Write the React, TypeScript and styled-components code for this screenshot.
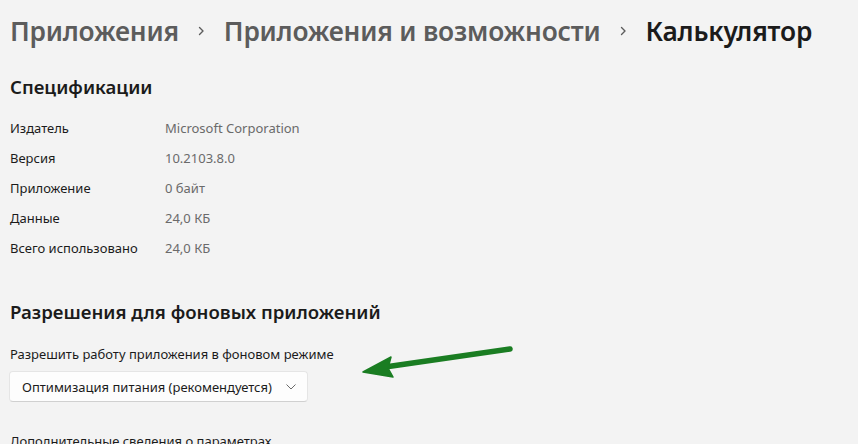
import React from 'react';
import styled, { createGlobalStyle } from 'styled-components';

const GlobalStyle = createGlobalStyle`
  html, body {
    margin: 0;
    padding: 0;
    background: #f3f3f3;
  }
  body {
    font-family: "Noto Sans", "Open Sans", sans-serif;
    color: #1a1a1a;
    overflow: hidden;
  }
`;

const Root = styled.div`
  position: relative;
  width: 858px;
  height: 444px;
  overflow: hidden;
  padding: 0 0 0 10px;
  box-sizing: border-box;
`;

const Breadcrumbs = styled.div`
  display: flex;
  align-items: center;
  height: 62px;
  font-size: 26.3px;
  font-weight: 600;
  letter-spacing: -0.2px;
`;

const Crumb = styled.span<{ $current?: boolean }>`
  color: ${(p) => (p.$current ? '#1b1b1b' : '#5c5c5c')};
`;

const Separator = styled.span`
  display: flex;
  align-items: center;
  justify-content: center;
  width: 45px;
  color: #5c5c5c;
`;

const SectionTitle = styled.h2`
  margin: 0;
  font-size: 18.6px;
  font-weight: 600;
  line-height: 26px;
  color: #1b1b1b;
`;

const SpecList = styled.div`
  display: flex;
  flex-direction: column;
  margin-top: 13px;
`;

const SpecRow = styled.div`
  display: grid;
  grid-template-columns: 155px 1fr;
  height: 30px;
  align-items: center;
  font-size: 13px;
`;

const SpecLabel = styled.span`
  color: #1b1b1b;
`;

const SpecValue = styled.span`
  color: #6a6a6a;
`;

const Section = styled.section<{ $top: number }>`
  margin-top: ${(p) => p.$top}px;
`;

const FieldLabel = styled.div`
  margin-top: 20px;
  font-size: 13px;
  color: #1b1b1b;
  line-height: 18px;
`;

const Select = styled.div`
  display: inline-flex;
  align-items: center;
  gap: 14px;
  margin-top: 8px;
  margin-left: -1px;
  height: 31px;
  padding: 0 11px 0 12px;
  box-sizing: border-box;
  background: #fdfdfd;
  border: 1px solid #e5e5e5;
  border-bottom-color: #d0d0d0;
  border-radius: 4px;
  font-size: 13px;
  color: #1b1b1b;
`;

const MoreLink = styled.div`
  margin-top: 30px;
  font-size: 13px;
  color: #1b1b1b;
`;

const Arrow = styled.svg`
  position: absolute;
  left: 355px;
  top: 340px;
`;

const specs = [
  ['Издатель', 'Microsoft Corporation'],
  ['Версия', '10.2103.8.0'],
  ['Приложение', '0 байт'],
  ['Данные', '24,0 КБ'],
  ['Всего использовано', '24,0 КБ'],
];

const Chevron = ({ size = 12 }: { size?: number }) => (
  <svg width={size} height={size} viewBox="0 0 12 12">
    <path d="M4.5 2.5 L8 6 L4.5 9.5" fill="none" stroke="#5c5c5c" strokeWidth="1.4" strokeLinecap="round" strokeLinejoin="round" />
  </svg>
);

export default function App() {
  return (
    <Root>
      <GlobalStyle />
      <Breadcrumbs>
        <Crumb>Приложения</Crumb>
        <Separator>
          <Chevron />
        </Separator>
        <Crumb>Приложения и возможности</Crumb>
        <Separator>
          <Chevron />
        </Separator>
        <Crumb $current>Калькулятор</Crumb>
      </Breadcrumbs>

      <Section $top={12}>
        <SectionTitle>Спецификации</SectionTitle>
        <SpecList>
          {specs.map(([label, value]) => (
            <SpecRow key={label}>
              <SpecLabel>{label}</SpecLabel>
              <SpecValue>{value}</SpecValue>
            </SpecRow>
          ))}
        </SpecList>
      </Section>

      <Section $top={36}>
        <SectionTitle>Разрешения для фоновых приложений</SectionTitle>
        <FieldLabel>Разрешить работу приложения в фоновом режиме</FieldLabel>
        <Select>
          <span>Оптимизация питания (рекомендуется)</span>
          <svg width="10" height="6" viewBox="0 0 10 6">
            <path d="M0.5 0.5 L5 5 L9.5 0.5" fill="none" stroke="#6a6a6a" strokeWidth="1" />
          </svg>
        </Select>
        <MoreLink>Дополнительные сведения о параметрах</MoreLink>
      </Section>

      <Arrow width="170" height="45" viewBox="0 0 170 45">
        <path d="M155 9 L30 27" stroke="#1a7d22" strokeWidth="5.5" strokeLinecap="round" />
        <path d="M8 32 L36 17 L33 28 L38 37 Z" fill="#1a7d22" stroke="#1a7d22" strokeWidth="1.5" strokeLinejoin="round" />
      </Arrow>
    </Root>
  );
}
